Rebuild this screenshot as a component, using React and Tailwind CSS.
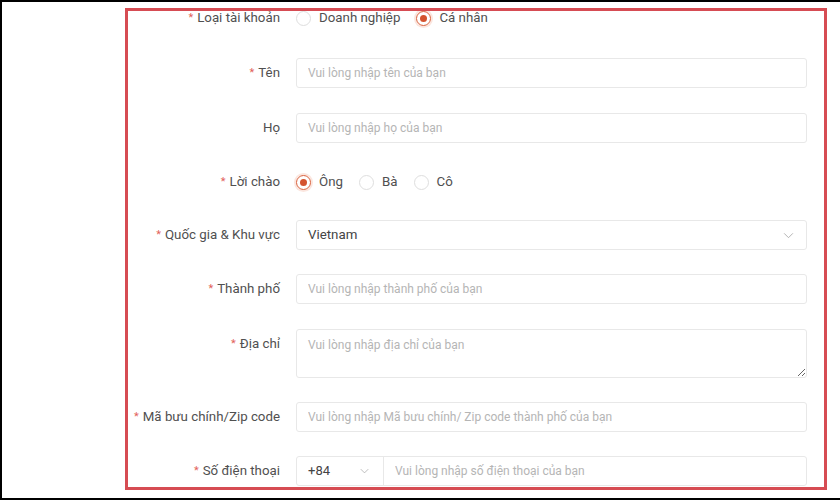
import { useState } from 'react';

const font = { fontFamily: 'Roboto, "Noto Sans", sans-serif' };

const Chevron = ({ className }) => (
  <svg viewBox="0 0 12 8" className={className} fill="none" stroke="currentColor" strokeWidth="1">
    <path d="M1 1.5 6 6.5 11 1.5" />
  </svg>
);

const Label = ({ text, required }) => (
  <div className="w-[152px] shrink-0 h-[30px] flex items-center justify-end whitespace-nowrap text-[13.3px] text-[#505050]">
    {required && <span className="text-[#e2625a] mr-[4px] text-[11px]">*</span>}
    <span>{text}</span>
  </div>
);

const Radio = ({ label, checked, onClick }) => (
  <button type="button" onClick={onClick} className="flex items-center gap-[8px] mr-[16px]">
    <span
      className={
        checked
          ? 'w-[15px] h-[15px] rounded-full border border-[#d9603b] flex items-center justify-center shadow-[0_0_0_2px_#fbe6df]'
          : 'w-[15px] h-[15px] rounded-full border border-[#dedede]'
      }
    >
      {checked && <span className="w-[7px] h-[7px] rounded-full bg-[#d4532f]"></span>}
    </span>
    <span className="text-[13.3px] text-[#505050]">{label}</span>
  </button>
);

const TextInput = ({ placeholder }) => (
  <input
    placeholder={placeholder}
    className="w-[511px] h-[30px] border border-[#e8e8e8] rounded-[3px] px-[11px] text-[12px] text-[#333] placeholder:text-[#b5b5b5] outline-none"
  />
);

const Row = ({ label, required, className = '', children }) => (
  <div className={`flex items-start gap-[16px] ${className}`}>
    <Label text={label} required={required} />
    {children}
  </div>
);

export default function App() {
  const [accountType, setAccountType] = useState('personal');
  const [title, setTitle] = useState('ong');

  return (
    <div className="w-[840px] h-[500px] bg-white border-t-2 border-l-2 border-b-2 border-black pl-[123px] pt-[6px]" style={font}>
      <div className="w-[702px] h-[482px] border-[3px] border-[#d64c53] overflow-hidden">
        <div className="flex flex-col gap-[25px] -mt-[8px]">
          <Row label="Loại tài khoản" required>
            <div className="h-[30px] flex items-center">
              <Radio label="Doanh nghiệp" checked={accountType === 'business'} onClick={() => setAccountType('business')} />
              <Radio label="Cá nhân" checked={accountType === 'personal'} onClick={() => setAccountType('personal')} />
            </div>
          </Row>

          <Row label="Tên" required>
            <TextInput placeholder="Vui lòng nhập tên của bạn" />
          </Row>

          <Row label="Họ">
            <TextInput placeholder="Vui lòng nhập họ của bạn" />
          </Row>

          <Row label="Lời chào" required className="h-[28px] -mt-px">
            <div className="h-[30px] flex items-center">
              <Radio label="Ông" checked={title === 'ong'} onClick={() => setTitle('ong')} />
              <Radio label="Bà" checked={title === 'ba'} onClick={() => setTitle('ba')} />
              <Radio label="Cô" checked={title === 'co'} onClick={() => setTitle('co')} />
            </div>
          </Row>

          <Row label="Quốc gia & Khu vực" required>
            <div className="w-[511px] h-[30px] border border-[#e8e8e8] rounded-[3px] pl-[11px] pr-[12px] flex items-center justify-between">
              <span className="text-[13.3px] text-[#444]">Vietnam</span>
              <Chevron className="w-[11px] h-[7px] text-[#a8a8a8]" />
            </div>
          </Row>

          <Row label="Thành phố" required className="-mt-px">
            <TextInput placeholder="Vui lòng nhập thành phố của bạn" />
          </Row>

          <Row label="Địa chỉ" required>
            <textarea
              placeholder="Vui lòng nhập địa chỉ của bạn"
              className="w-[511px] h-[49px] border border-[#e8e8e8] rounded-[3px] px-[11px] pt-[6px] text-[12px] text-[#333] placeholder:text-[#b5b5b5] outline-none resize-y"
            ></textarea>
          </Row>

          <Row label="Mã bưu chính/Zip code" required className="-mt-px">
            <TextInput placeholder="Vui lòng nhập Mã bưu chính/ Zip code thành phố của bạn" />
          </Row>

          <Row label="Số điện thoại" required className="-mt-px">
            <div className="w-[511px] h-[30px] border border-[#e8e8e8] rounded-[3px] flex">
              <div className="w-[87px] shrink-0 border-r border-[#e8e8e8] pl-[11px] pr-[14px] flex items-center justify-between">
                <span className="text-[13px] text-[#444]">+84</span>
                <Chevron className="w-[9px] h-[6px] text-[#a8a8a8]" />
              </div>
              <input
                placeholder="Vui lòng nhập số điện thoại của bạn"
                className="flex-1 px-[11px] text-[12px] text-[#333] placeholder:text-[#b5b5b5] outline-none"
              />
            </div>
          </Row>
        </div>
      </div>
    </div>
  );
}
